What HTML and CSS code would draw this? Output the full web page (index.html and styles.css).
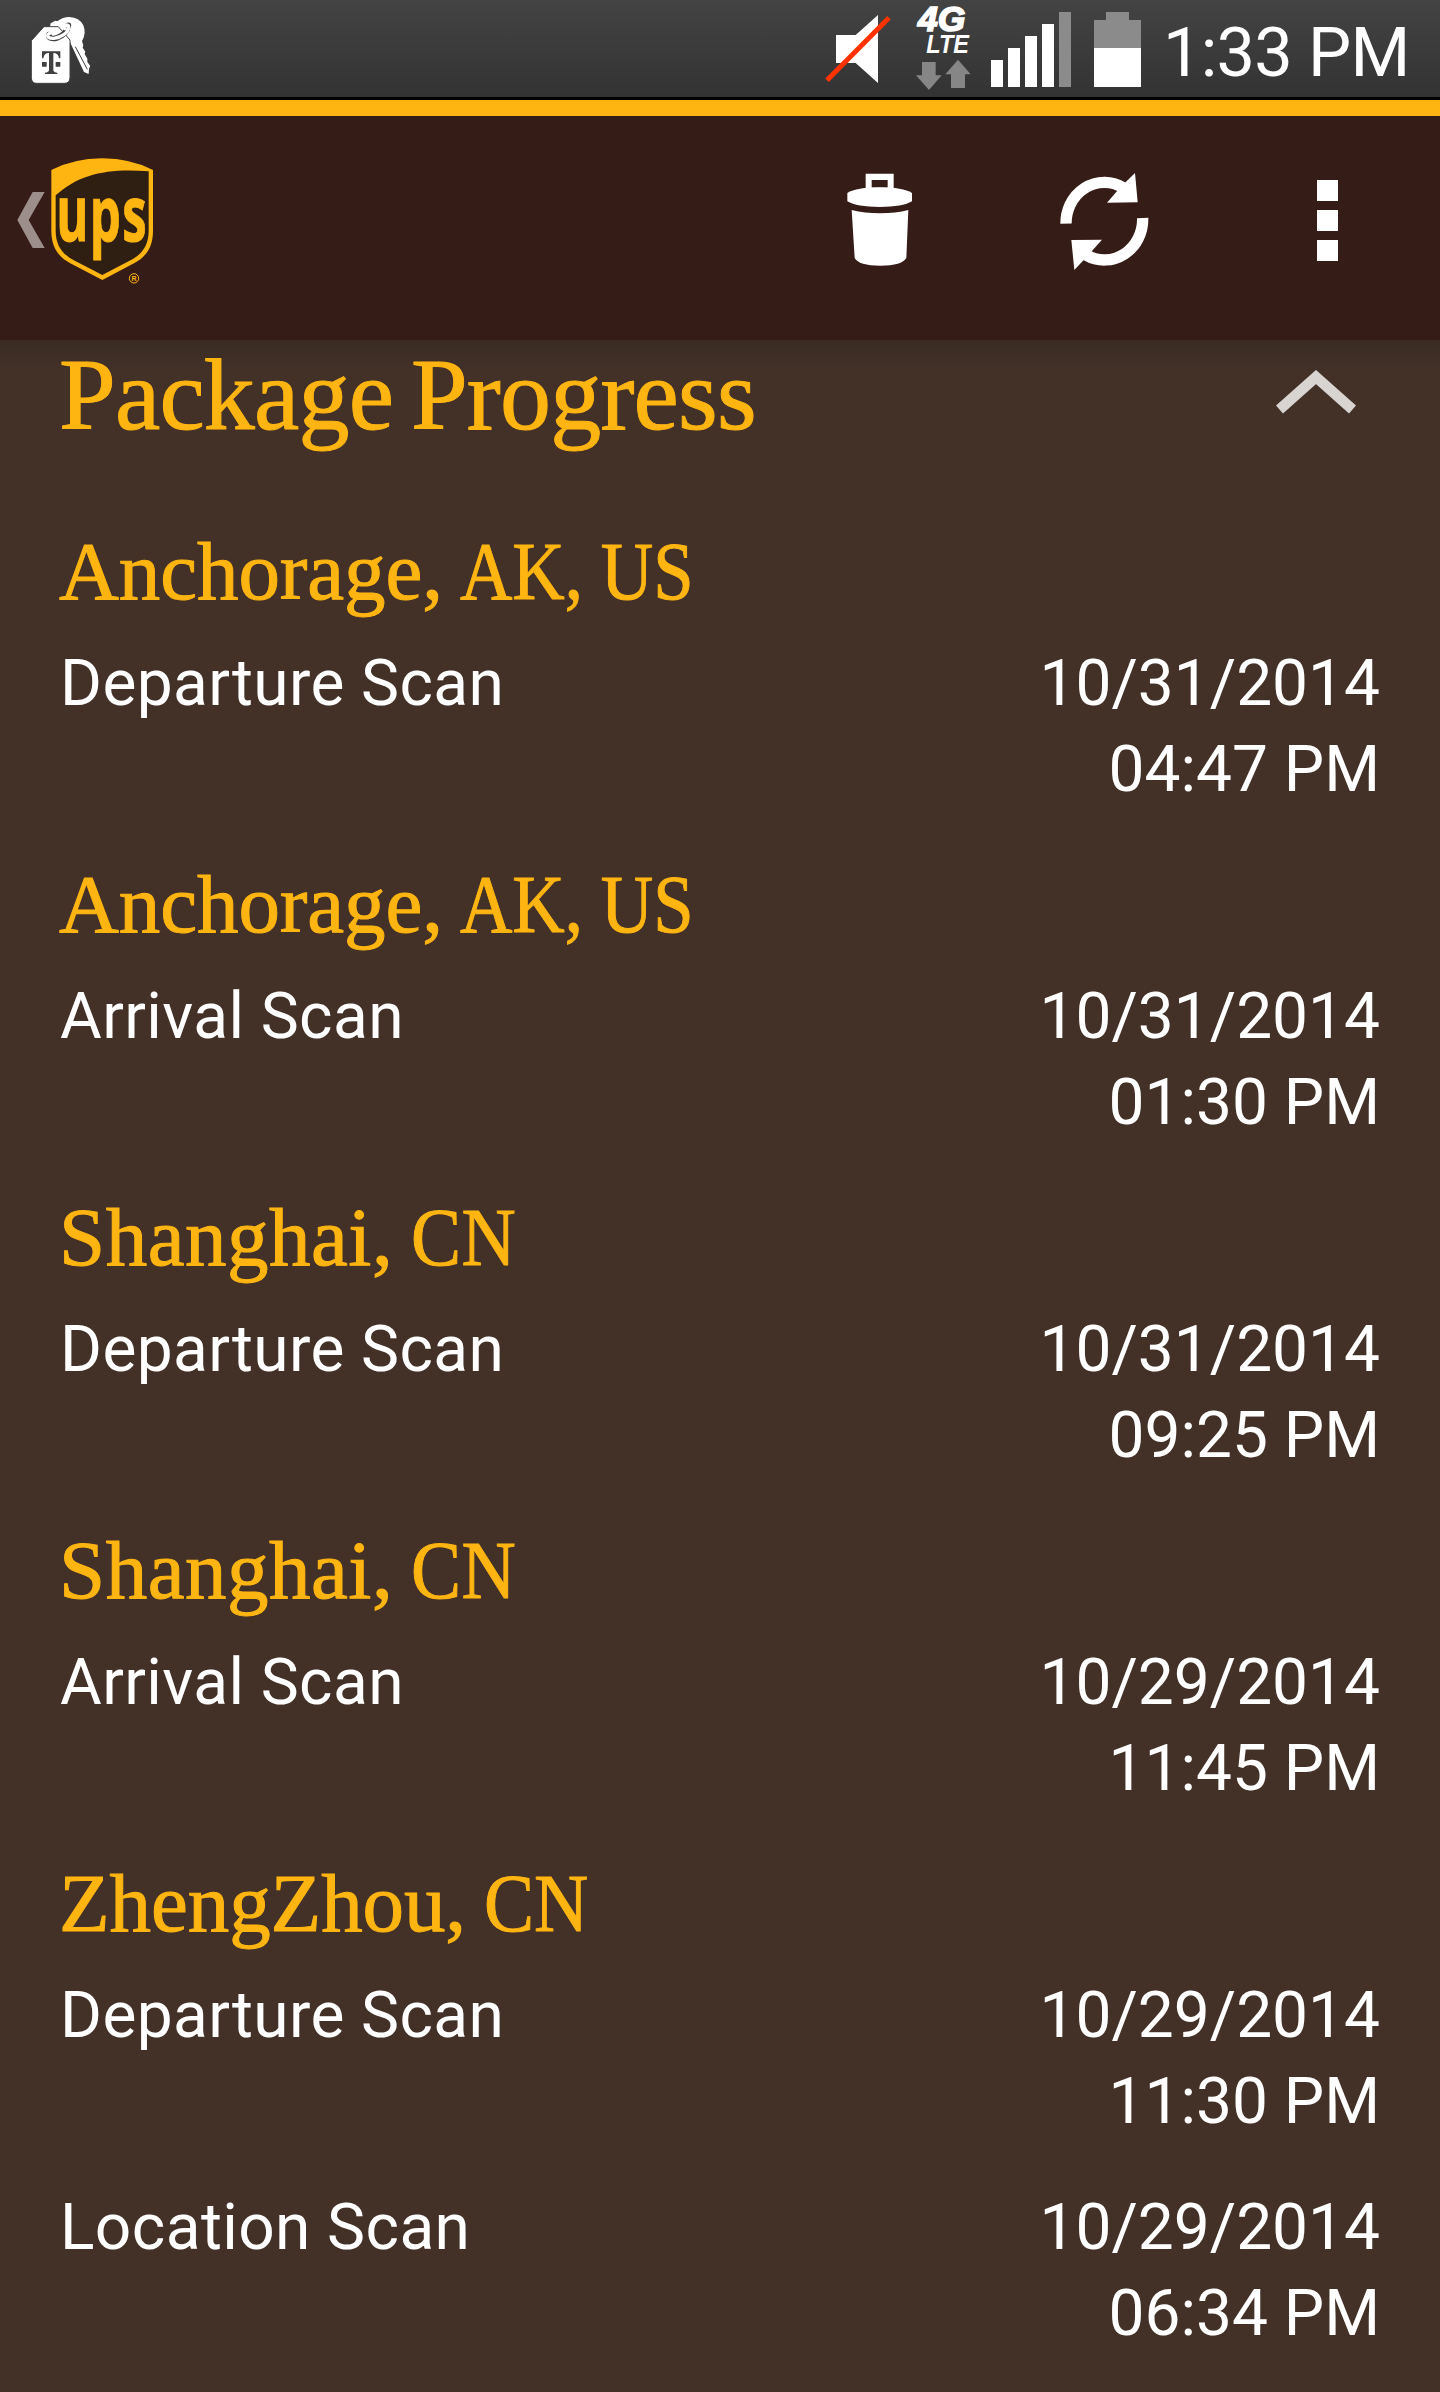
FILE: index.html
```
<!DOCTYPE html>
<html lang="en">
<head>
<meta charset="UTF-8" />
<meta name="viewport" content="width=device-width, initial-scale=1.0"/>
<title>Package Progress</title>
<link rel="stylesheet" href="styles.css">
</head>
<body>

<!-- Phone status bar -->
<div class="status-bar">
    <svg class="icon-tag" viewBox="84 0 198 291">
        <path fill="#fff" d="M152 70 L166 62 L172 64 Q188 51 208 51 Q238 52 250 76 Q260 100 246 124 L250 136 L248 143 L256 155 L254 162 L262 176 L262 186 L271 198 L267 206 L266 222 L252 216 L208 122 L190 104 L150 80 Z"/>
        <path fill="#fff" stroke="#404040" stroke-width="3" d="M132 80 H175 L210 120 V232 Q210 250 193 250 H110 Q94 250 94 232 V122 Z"/>
        <path fill="none" stroke="#404040" stroke-width="3" d="M226 140 L262 208"/>
        <path fill="none" stroke="#404040" stroke-width="17" stroke-linecap="round" d="M147 104 C143 126 198 116 205 76"/>
        <path fill="none" stroke="#fff" stroke-width="10" stroke-linecap="round" d="M160 98 C136 98 138 117 162 115 C184 112 206 98 206 80 C205 70 192 76 195 86"/>
        <g fill="#404040">
            <path d="M126 154 H181 V175 H177 Q175 159 160 159 V209 Q160 217 172 218 V222 H135 V218 Q147 217 147 209 V159 Q132 159 130 175 H126 Z"/>
            <path d="M126 186 H140 V200 H126 Z M167 186 H181 V200 H167 Z"/>
        </g>
    </svg>

    <div class="status-right">
        <svg class="icon-mute" viewBox="60 0 240 291">
            <path fill="#fff" d="M108 105 H167 L234 45 V249 L167 189 H108 Z"/>
            <path stroke="#ff3300" stroke-width="15" d="M81 241 L267 53"/>
        </svg>
        <svg class="icon-lte" viewBox="330 0 210 291">
            <text class="lte-big" x="354" y="94" textLength="142" lengthAdjust="spacingAndGlyphs">4G</text>
            <text class="lte-small" x="379" y="158" textLength="128" lengthAdjust="spacingAndGlyphs">LTE</text>
            <path fill="#868686" d="M366 186 H407 V226 H425 L387 270 L348 226 H366 Z"/>
            <path fill="#868686" d="M474 179 L512 223 H495 V264 H453 V223 H436 Z"/>
        </svg>
        <svg class="icon-signal" viewBox="573 0 240 291">
            <path fill="#fff" d="M573 180 h36 v81 h-36 Z M624 144 h36 v117 h-36 Z M675 108 h36 v153 h-36 Z M726 72 h36 v189 h-36 Z"/>
            <path fill="#8b8b8b" d="M777 36 h36 v225 h-36 Z"/>
        </svg>
        <svg class="icon-battery" viewBox="42 0 141 291">
            <path fill="#8b8b8b" d="M78 36 H147 V60 H183 V144 H42 V60 H78 Z"/>
            <path fill="#fff" d="M42 144 H183 V261 H42 Z"/>
        </svg>
        <span class="clock">1:33 PM</span>
    </div>
</div>

<!-- App action bar -->
<div class="action-bar">
    <svg class="logo" viewBox="45 348 426 672">
        <path fill="#9b8e8b" d="M98 576 H134 L86 660 L134 744 H98 L52 660 Z"/>
        <path fill="#ffb511" d="M154 510 Q220 476 307 475 Q393 476 459 510 V692 C459 742 437 771 402 790 L307 840 L211 790 C176 771 154 742 154 692 Z"/>
        <path fill="#2f1e12" d="M167 586 C238 520 330 504 446 514 V692 C446 738 424 763 393 780 L307 825 L220 780 C189 763 167 738 167 692 Z"/>
        <text class="ups" transform="translate(169 722) scale(.63 1)" textLength="430">ups</text>
        <circle cx="402" cy="835" r="14" fill="none" stroke="#ffb511" stroke-width="3"/>
        <text class="reg" x="402" y="843">R</text>
    </svg>

    <div class="actions">
        <svg class="icon-trash" viewBox="0 0 216 420">
            <path fill="#fff" fill-rule="evenodd" d="M71 118 V71 H155 V118 Z M89 90 V113 H137 V90 Z"/>
            <path fill="#fff" d="M16 129 Q44 112 113 112 Q182 112 210 129 V154 Q182 171 113 171 Q44 171 16 154 Z"/>
            <path fill="#fff" d="M29 180 Q68 190 114 190 Q162 190 199 180 L193 324 Q180 347 115 347 Q50 347 38 324 Z"/>
        </svg>
        <svg class="icon-refresh" viewBox="705 0 300 420">
            <path fill="none" stroke="#fff" stroke-width="34" d="M738 221 A115 122 0 0 1 908 112"/>
            <path fill="#fff" d="M945 69 L953 157 L861 158 L892 122 L915 98 Z"/>
            <path fill="none" stroke="#fff" stroke-width="34" d="M968 204 A115 122 0 0 1 798 315"/>
            <path fill="#fff" d="M763 360 L754 270 L846 269 L815 304 L791 330 Z"/>
        </svg>
        <svg class="icon-menu" viewBox="0 0 21 82">
            <path fill="#fff" d="M0 0 h21 v21 h-21 Z M0 30 h21 v21 h-21 Z M0 60 h21 v21 h-21 Z"/>
        </svg>
    </div>
</div>

<div class="content">
    <div class="section-title">
        <h1>Package Progress</h1>
        <svg class="icon-up" viewBox="0 0 80 44">
            <path fill="none" stroke="#d8d4d2" stroke-width="10.5" d="M3.5 39.5 L40 7 L76.5 39.5"/>
        </svg>
    </div>

    <div class="stop">
        <h2>Anchorage, <span class="region">AK, US</span></h2>
        <div class="scan">
            <span class="event">Departure Scan</span>
            <div class="when">10/31/2014<br>04:47 PM</div>
        </div>
    </div>

    <div class="stop">
        <h2>Anchorage, <span class="region">AK, US</span></h2>
        <div class="scan">
            <span class="event">Arrival Scan</span>
            <div class="when">10/31/2014<br>01:30 PM</div>
        </div>
    </div>

    <div class="stop">
        <h2 class="wide">Shanghai, <span class="country">CN</span></h2>
        <div class="scan">
            <span class="event">Departure Scan</span>
            <div class="when">10/31/2014<br>09:25 PM</div>
        </div>
    </div>

    <div class="stop">
        <h2 class="wide">Shanghai, <span class="country">CN</span></h2>
        <div class="scan">
            <span class="event">Arrival Scan</span>
            <div class="when">10/29/2014<br>11:45 PM</div>
        </div>
    </div>

    <div class="stop">
        <h2>ZhengZhou, <span class="country">CN</span></h2>
        <div class="scan">
            <span class="event">Departure Scan</span>
            <div class="when">10/29/2014<br>11:30 PM</div>
        </div>
        <div class="scan">
            <span class="event">Location Scan</span>
            <div class="when">10/29/2014<br>06:34 PM</div>
        </div>
    </div>
</div>

</body>
</html>
```
FILE: styles.css
```
body {
    margin: 0;
    width: 1440px;
    height: 2392px;
    overflow: hidden;
    background: #433128;
    color: #fff;
    font-family: Roboto, sans-serif;
}

svg {
    display: block;
    flex: none;
}

/* Status bar */
.status-bar {
    display: flex;
    justify-content: space-between;
    height: 97px;
    padding: 0 32px 0 28px;
    border-bottom: 3px solid #000;
    background: linear-gradient(#434343, #333);
}

.status-bar svg {
    height: 97px;
}

.status-right {
    display: flex;
}

.icon-tag {
    width: 66px;
}

.icon-mute {
    width: 80px;
    margin-right: 10px;
}

.icon-lte {
    width: 70px;
    margin-right: 11px;
}

.icon-signal {
    width: 80px;
    margin-right: 23px;
}

.icon-battery {
    width: 47px;
}

.lte-big,
.lte-small {
    font-family: "Liberation Sans", sans-serif;
    font-weight: bold;
    font-style: italic;
    fill: #fff;
}

.lte-big {
    font-size: 103px;
    stroke: #fff;
    stroke-width: 5px;
}

.lte-small {
    font-size: 79px;
}

.clock {
    width: 245px;
    margin-left: 22px;
    font-size: 68.5px;
    line-height: 105px;
    letter-spacing: -0.8px;
    white-space: nowrap;
}

/* Action bar */
.action-bar {
    display: flex;
    justify-content: space-between;
    height: 224px;
    padding: 0 102px 0 15px;
    border-top: 16px solid #ffb511;
    background: #361c16;
}

.logo {
    width: 142px;
    height: 224px;
}

.ups {
    font-family: "Open Sans", sans-serif;
    font-weight: bold;
    font-size: 234px;
    fill: #ffb511;
    stroke: #ffb511;
    stroke-width: 3px;
}

.reg {
    font-family: "Liberation Sans", sans-serif;
    font-weight: bold;
    font-size: 21px;
    text-anchor: middle;
    fill: #ffb511;
}

.actions {
    display: flex;
    align-items: flex-start;
}

.icon-trash {
    width: 72px;
    height: 140px;
    margin: 34px 141px 0 0;
}

.icon-refresh {
    width: 100px;
    height: 140px;
    margin: 34px 162px 0 0;
}

.icon-menu {
    width: 21px;
    height: 82px;
    margin-top: 64px;
}

/* Tracking list */
.content {
    height: 2052px;
    padding: 0 60px;
    box-sizing: border-box;
    background: linear-gradient(#392b23, #433128 32px);
}

.section-title {
    display: flex;
    justify-content: space-between;
    height: 180px;
    padding-right: 24px;
}

h1,
h2 {
    margin: 0 0 0 -1px;
    font-family: "Liberation Serif", serif;
    font-weight: normal;
    color: #ffb511;
    white-space: nowrap;
    -webkit-text-stroke: 1px #ffb511;
}

h1 {
    font-size: 102px;
    line-height: 110px;
    letter-spacing: -0.8px;
    word-spacing: -7px;
}

h2 {
    height: 121px;
    font-size: 83px;
    line-height: 102px;
    letter-spacing: -0.1px;
}

.wide {
    letter-spacing: 0.5px;
}

/* capitals run a bit narrower than the city name */
.region,
.country {
    display: inline-block;
    margin-left: -4px;
    transform: scaleX(0.875);
    transform-origin: left;
}

.country {
    margin-left: -3px;
    transform: scaleX(0.905);
}

.icon-up {
    width: 80px;
    height: 44px;
    margin-top: 30px;
}

.scan {
    display: flex;
    justify-content: space-between;
    height: 212px;
    font-size: 64px;
    line-height: 86px;
}

.event {
    letter-spacing: 0.4px;
}

.when {
    text-align: right;
}
```
